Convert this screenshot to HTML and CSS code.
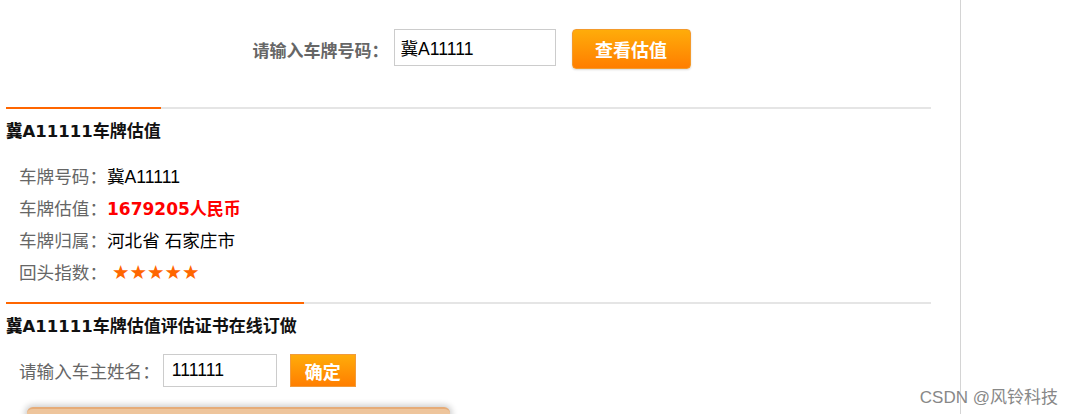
FILE: index.html
```html
<!DOCTYPE html>
<html lang="zh-CN">
<head>
    <meta charset="UTF-8">
    <title>车牌估值</title>
    <link rel="stylesheet" href="styles.css">
</head>
<body>
    <div class="page">
        <div class="main">
            <!-- 查询 -->
            <div class="search">
                <span class="search-label">请输入车牌号码：</span>
                <input class="search-input" type="text" value="冀A11111">
                <button class="btn-big">查看估值</button>
            </div>

            <div class="bar"><div class="bar-on" style="width: 155px;"></div></div>
            <h2 class="title"><b class="num">冀A11111</b>车牌估值</h2>

            <ul class="info">
                <li><span class="lab">车牌号码：</span>冀A11111</li>
                <li><span class="lab">车牌估值：</span><span class="price">1679205人民币</span></li>
                <li><span class="lab">车牌归属：</span>河北省 石家庄市</li>
                <li><span class="lab">回头指数：</span><span class="stars">★★★★★</span></li>
            </ul>

            <div class="bar"><div class="bar-on" style="width: 298px;"></div></div>
            <h2 class="title"><b class="num">冀A11111</b>车牌估值评估证书在线订做</h2>

            <div class="order">
                <span class="lab">请输入车主姓名：</span>
                <input class="name-input" type="text" value="111111">
                <button class="btn-small">确定</button>
            </div>

            <div class="cert"></div>
        </div>
        <div class="side"></div>
    </div>
    <div class="mark">CSDN @风铃科技</div>
</body>
</html>
```

FILE: styles.css
```css
body {
    margin: 0;
    font-family: "Liberation Sans", Arial, "Noto Sans CJK SC", sans-serif;
    font-size: 17.6px;
    color: #000;
    background: #fff;
    overflow: hidden;
}
.page {
    display: flex;
    height: 414px;
    overflow: hidden;
}
.main {
    width: 925px;
    margin-left: 6px;
}
.side {
    margin-left: 29px;
    width: 112px;
    border-left: 1px solid #d4d4d4;
}
.search {
    display: flex;
    justify-content: center;
    align-items: center;
    padding-top: 29px;
    padding-left: 6px;
    height: 40px;
}
.search-label {
    color: #666;
    font-weight: bold;
    font-family: "Noto Sans CJK SC", sans-serif;
    font-size: 17px;
    margin-right: 5px;
}
.search-input {
    box-sizing: border-box;
    width: 162px;
    height: 37px;
    margin-top: -3px;
    border: 1px solid #ccc;
    padding: 0 6px;
    font-family: "Liberation Sans", Arial, "Noto Sans CJK SC", sans-serif;
    font-size: 17.6px;
    color: #000;
}
.btn-big {
    margin-left: 16px;
    width: 119px;
    height: 40px;
    border: 1px solid #f39a2c;
    border-radius: 4px;
    background: linear-gradient(#ffac0a, #ff7e00);
    box-shadow: 0 1px 2px rgba(0,0,0,0.15);
    color: #fff;
    font-family: "Noto Sans CJK SC", serif;
    font-weight: bold;
    font-size: 18px;
    cursor: pointer;
}
.bar {
    margin-top: 38px;
    height: 2px;
    background: #e5e5e5;
}
.bar-on {
    height: 2px;
    background: #ff6600;
}
.title {
    margin: 0;
    height: 42px;
    line-height: 42px;
    font-size: 17px;
    font-weight: bold;
    font-family: "Noto Sans CJK SC", sans-serif;
    color: #111;
}
.num {
    font-family: "DejaVu Sans", Verdana, "Noto Sans CJK SC", sans-serif;
    font-size: 16.5px;
}
.info {
    list-style: none;
    margin: 0;
    padding: 10px 0 0 13px;
}
.info li {
    height: 32px;
    line-height: 32px;
}
.lab {
    color: #666;
}
.price {
    color: #ff0000;
    font-weight: bold;
    font-family: "DejaVu Sans", Verdana, "Noto Sans CJK SC", sans-serif;
    font-size: 17px;
}
.stars {
    color: #ff6600;
    font-size: 19.5px;
    padding-left: 5px;
    font-family: "DejaVu Sans", sans-serif;
}
.info + .bar {
    margin-top: 13px;
}
.order {
    display: flex;
    align-items: center;
    margin-top: 8px;
    padding-left: 13px;
    height: 33px;
}
.name-input {
    box-sizing: border-box;
    margin-left: 3px;
    width: 114px;
    height: 33px;
    border: 1px solid #ccc;
    padding: 0 8px;
    font-family: "Liberation Sans", Arial, sans-serif;
    font-size: 17.6px;
    color: #000;
}
.btn-small {
    margin-left: 13px;
    width: 66px;
    height: 33px;
    border: 1px solid #f29b3a;
    background: linear-gradient(#ffac0a, #ff7e00);
    color: #fff;
    font-family: "Noto Sans CJK SC", serif;
    font-weight: bold;
    font-size: 18px;
    cursor: pointer;
}
.cert {
    margin: 20px 0 0 21px;
    width: 423px;
    height: 40px;
    border-radius: 6px;
    background: #eec59c;
    border-top: 2px solid #e6ac78;
    box-shadow: 0 0 6px 2px rgba(0,0,0,0.2);
}
.mark {
    position: absolute;
    right: 16px;
    bottom: 6px;
    color: #888;
    font-size: 17px;
    font-family: "Liberation Sans", Arial, "Noto Sans CJK SC", sans-serif;
    text-shadow: 0 0 2px #fff;
}
```
